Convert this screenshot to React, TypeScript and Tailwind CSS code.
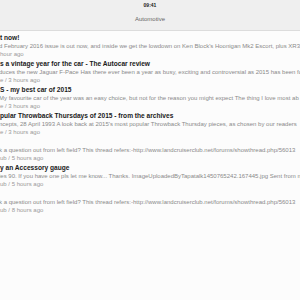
const ITEMS = [
  {
    title: "t now!",
    body: "d February 2016 issue is out now, and inside we get the lowdown on Ken Block's Hoonigan Mk2 Escort, plus XR3",
    meta: " hour ago",
  },
  {
    title: "s a vintage year for the car - The Autocar review",
    body: "duces the new Jaguar F-Pace Has there ever been a year as busy, exciting and controversial as 2015 has been for",
    meta: "e / 3 hours ago",
  },
  {
    title: "S - my best car of 2015",
    body: "My favourite car of the year was an easy choice, but not for the reason you might expect The thing I love most ab",
    meta: "e / 3 hours ago",
  },
  {
    title: "pular Throwback Thursdays of 2015 - from the archives",
    body: "ncepts, 28 April 1993 A look back at 2015's most popular Throwback Thursday pieces, as chosen by our readers",
    meta: "e / 3 hours ago",
  },
  {
    title: "",
    body: "k a question out from left field? This thread refers:-http://www.landcruiserclub.net/forums/showthread.php/56013",
    meta: "ub / 5 hours ago",
  },
  {
    title: "y an Accessory gauge",
    body: "ies 90. If you have one pls let me know... Thanks. ImageUploadedByTapatalk1450765242.167445.jpg Sent from my",
    meta: "ub / 5 hours ago",
  },
  {
    title: "",
    body: "k a question out from left field? This thread refers:-http://www.landcruiserclub.net/forums/showthread.php/56013",
    meta: "ub / 8 hours ago",
  },
];

export default function App() {
  return (
    <div
      className="w-[300px] h-[300px] overflow-hidden bg-[#fcfcfc]"
      style={{ fontFamily: '"Liberation Sans", Arial, sans-serif' }}
    >
      <div className="h-[31px] bg-[#efefef] border-b border-[#dcdcdc] flex flex-col items-center">
        <div className="mt-[1px] text-[5px] leading-[8px] font-bold text-[#222]">09:41</div>
        <div className="mt-[6px] text-[6px] leading-[8px] text-[#666]">Automotive</div>
      </div>
      <div className="pt-[2px]">
        {ITEMS.map((item, i) => (
          <div key={i} className="h-[26px] whitespace-nowrap overflow-hidden">
            <div className="h-[9px] text-[6.6px] leading-[9px] font-bold text-[#1a1a1a]">{item.title}</div>
            <div className="h-[8px] text-[6px] leading-[8px] text-[#8a8a8a] -ml-[1px]">{item.body}</div>
            <div className="h-[8px] text-[6px] leading-[8px] text-[#9a9a9a]">{item.meta}</div>
          </div>
        ))}
      </div>
    </div>
  );
}
